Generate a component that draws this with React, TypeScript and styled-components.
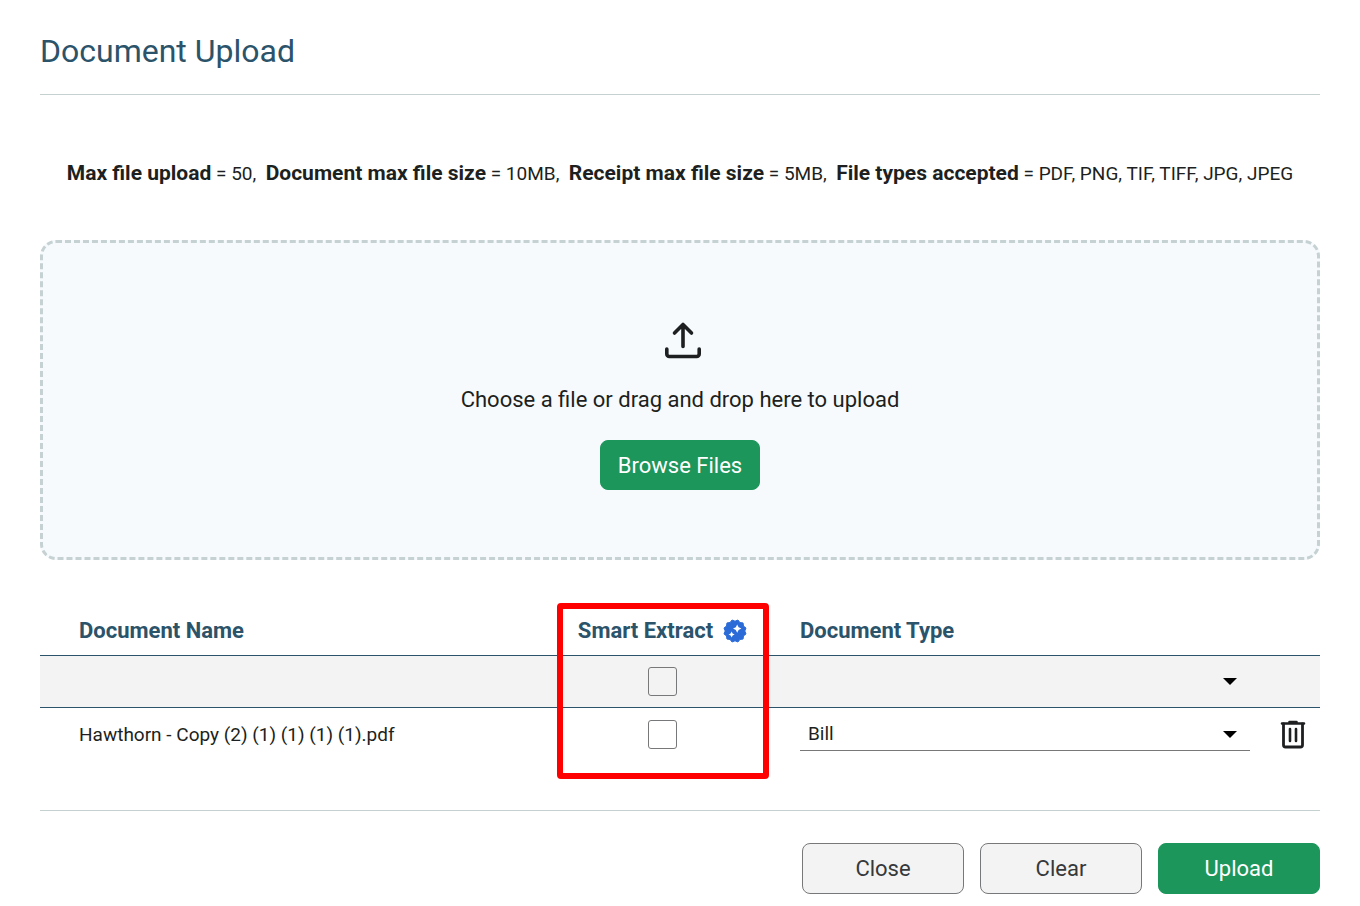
import React from "react";
import styled, { createGlobalStyle } from "styled-components";

const GlobalStyle = createGlobalStyle`
  *, *::before, *::after { box-sizing: border-box; }
  body {
    margin: 0;
    background: #ffffff;
    color: #1d1f20;
    font-family: Roboto, "Liberation Sans", sans-serif;
    font-size: 19px;
  }
`;

const Page = styled.main`
  padding: 0 40px;
`;

const Header = styled.header`
  padding: 31px 0 23px;
  border-bottom: 1px solid #c5d1d1;
`;

const Title = styled.h1`
  margin: 0;
  color: #2b536a;
  font-size: 32px;
  font-weight: 400;
  line-height: 40px;
`;

const Limits = styled.p`
  margin: 65px 0 53px;
  text-align: center;
  font-size: 19px;
  line-height: 27px;
  white-space: pre-wrap;
`;

const LimitName = styled.strong`
  font-size: 21px;
  font-weight: 700;
`;

const DropZone = styled.section`
  display: flex;
  flex-direction: column;
  align-items: center;
  height: 320px;
  padding-top: 77px;
  border: 3px dashed #c5d1d3;
  border-radius: 16px;
  background: #f6fafd;
`;

const UploadIcon = styled.svg`
  width: 40px;
  height: 40px;
  margin-left: 6px;
  fill: none;
  stroke: #1d1f20;
  stroke-width: 3.6;
  stroke-linecap: round;
  stroke-linejoin: round;
`;

const Hint = styled.p`
  margin: 24px 0;
  font-size: 22px;
  line-height: 32px;
`;

const Button = styled.button<{ $primary?: boolean; $width: number }>`
  width: ${(p) => p.$width}px;
  height: ${(p) => (p.$width > 160 ? 51 : 50)}px;
  padding: 0;
  border: 1px solid ${(p) => (p.$primary ? "#1c965b" : "#77787a")};
  border-radius: 8px;
  background: ${(p) => (p.$primary ? "#1c965b" : "#f3f3f3")};
  color: ${(p) => (p.$primary ? "#ffffff" : "#36383a")};
  font-family: inherit;
  font-size: 22px;
  cursor: pointer;
`;

const Documents = styled.table`
  width: 100%;
  margin-top: 47px;
  table-layout: fixed;
  border-collapse: collapse;
`;

const HeadCell = styled.th<{ $align?: "left" | "center"; $indent?: boolean }>`
  position: relative;
  height: 48px;
  padding: 0 0 0 ${(p) => (p.$indent ? 39 : 0)}px;
  color: #2b536a;
  font-size: 22px;
  font-weight: 700;
  line-height: 28px;
  text-align: ${(p) => p.$align ?? "left"};
`;

const HeadLabel = styled.span`
  display: inline-flex;
  align-items: center;
  gap: 10px;
`;

const Highlight = styled.span`
  position: absolute;
  z-index: 1;
  top: -4px;
  left: 32px;
  right: 31px;
  height: 176px;
  border: 6px solid #ff0000;
  border-radius: 4px;
  pointer-events: none;
`;

const DefaultsRow = styled.tr`
  height: 52px;
  background: #f3f3f3;
  border-top: 1px solid #2b536a;
  border-bottom: 1px solid #2b536a;
`;

const DocumentRow = styled.tr`
  height: 54px;
`;

const Cell = styled.td<{ $align?: "left" | "center"; $indent?: boolean }>`
  padding: 0 0 0 ${(p) => (p.$indent ? 39 : 0)}px;
  text-align: ${(p) => p.$align ?? "left"};
  vertical-align: middle;
`;

const Checkbox = styled.input`
  display: block;
  width: 29px;
  height: 29px;
  margin: 0 auto;
  appearance: none;
  border: 1px solid #77787a;
  border-radius: 3px;
  background: transparent;

  &:checked {
    background: #1c965b;
  }
`;

const SelectBox = styled.div`
  display: grid;
  align-items: center;
  width: 450px;
  max-width: 100%;
`;

const Select = styled.select<{ $underlined?: boolean }>`
  grid-area: 1 / 1;
  width: 100%;
  height: 34px;
  padding: 0 40px 0 8px;
  appearance: none;
  border: 0;
  border-bottom: 1px solid ${(p) => (p.$underlined ? "#77787a" : "transparent")};
  border-radius: 0;
  background: transparent;
  color: inherit;
  font-family: inherit;
  font-size: 19px;
`;

const Caret = styled.svg`
  grid-area: 1 / 1;
  justify-self: end;
  width: 14px;
  height: 7px;
  margin-right: 13px;
  fill: #000000;
  pointer-events: none;
`;

const IconButton = styled.button`
  display: block;
  width: 28px;
  height: 30px;
  margin: 0 auto;
  padding: 0;
  border: 0;
  background: transparent;
  cursor: pointer;
`;

const Footer = styled.footer`
  display: flex;
  justify-content: flex-end;
  gap: 16px;
  margin-top: 49px;
  padding: 32px 0 12px;
  border-top: 1px solid #c5d1d1;
`;

const limits = [
  { name: "Max file upload", value: "50" },
  { name: "Document max file size", value: "10MB" },
  { name: "Receipt max file size", value: "5MB" },
  { name: "File types accepted", value: "PDF, PNG, TIF, TIFF, JPG, JPEG" },
];

function SealIcon() {
  const points: string[] = [];
  for (let i = 0; i < 24; i++) {
    const r = i % 2 === 0 ? 11.4 : 9.8;
    const a = (Math.PI * (i + 1)) / 12;
    points.push(`${(12 + r * Math.cos(a)).toFixed(2)},${(12 + r * Math.sin(a)).toFixed(2)}`);
  }
  return (
    <svg width="24" height="24" viewBox="0 0 24 24" aria-hidden="true">
      <polygon points={points.join(" ")} fill="#2b6bd8" stroke="#2b6bd8" strokeLinejoin="round" />
      <path
        d="M14.2 5.4 15.600 8.200 18.400 9.600 15.600 11 14.200 13.800 12.800 11 10 9.600 12.800 8.200ZM8.600 12.400l1 2 2 1-2 1-1 2-1-2-2-1 2-1Z"
        fill="#ffffff"
      />
    </svg>
  );
}

function TrashIcon() {
  return (
    <svg width="28" height="30" viewBox="0 0 28 30" fill="none" stroke="#1d1f20" strokeLinecap="round" strokeLinejoin="round" aria-hidden="true">
      <path d="M3 4.500h22M10.500 3h7" strokeWidth="2.6" />
      <path d="M4.500 5v21a2 2 0 0 0 2 2h15a2 2 0 0 0 2-2V5" strokeWidth="2.8" />
      <path d="M11 10v12M17 10v12" strokeWidth="2.6" />
    </svg>
  );
}

function TypeSelect({ label, value, underlined }: { label: string; value: string; underlined?: boolean }) {
  return (
    <SelectBox>
      <Select aria-label={label} defaultValue={value} $underlined={underlined}>
        <option value="" />
        <option value="Bill">Bill</option>
        <option value="Receipt">Receipt</option>
      </Select>
      <Caret viewBox="0 0 14 7" aria-hidden="true">
        <path d="M0 0h14L7 7Z" />
      </Caret>
    </SelectBox>
  );
}

export default function App() {
  return (
    <>
      <GlobalStyle />
      <Page>
        <Header>
          <Title>Document Upload</Title>
        </Header>
        <Limits>
          {limits.map(({ name, value }, i) => (
            <React.Fragment key={name}>
              {i > 0 && ",  "}
              <LimitName>{name}</LimitName> = {value}
            </React.Fragment>
          ))}
        </Limits>
        <DropZone>
          <UploadIcon viewBox="0 0 40 40" aria-hidden="true">
            <path d="M20 26.500V5M11.500 13 20 4.500l8.500 8.500M3.800 29v5a2.500 2.500 0 0 0 2.500 2.500h27.400a2.500 2.500 0 0 0 2.500-2.500v-5" />
          </UploadIcon>
          <Hint>Choose a file or drag and drop here to upload</Hint>
          <Button type="button" $primary $width={160}>Browse Files</Button>
        </DropZone>
        <Documents>
          <colgroup>
            <col />
            <col style={{ width: 275 }} />
            <col style={{ width: 465 }} />
            <col style={{ width: 55 }} />
          </colgroup>
          <thead>
            <tr>
              <HeadCell scope="col" $indent>Document Name</HeadCell>
              <HeadCell scope="col" $align="center">
                <HeadLabel>
                  Smart Extract
                  <SealIcon />
                </HeadLabel>
                <Highlight />
              </HeadCell>
              <HeadCell scope="col">Document Type</HeadCell>
              <td />
            </tr>
          </thead>
          <tbody>
            <DefaultsRow>
              <Cell />
              <Cell $align="center">
                <Checkbox type="checkbox" aria-label="Smart Extract for all documents" />
              </Cell>
              <Cell>
                <TypeSelect label="Document Type for all documents" value="" />
              </Cell>
              <Cell />
            </DefaultsRow>
            <DocumentRow>
              <Cell $indent>Hawthorn - Copy (2) (1) (1) (1) (1).pdf</Cell>
              <Cell $align="center">
                <Checkbox type="checkbox" aria-label="Smart Extract" />
              </Cell>
              <Cell>
                <TypeSelect label="Document Type" value="Bill" underlined />
              </Cell>
              <Cell>
                <IconButton type="button" aria-label="Delete document">
                  <TrashIcon />
                </IconButton>
              </Cell>
            </DocumentRow>
          </tbody>
        </Documents>
        <Footer>
          <Button type="button" $width={162}>Close</Button>
          <Button type="button" $width={162}>Clear</Button>
          <Button type="button" $primary $width={162}>Upload</Button>
        </Footer>
      </Page>
    </>
  );
}
